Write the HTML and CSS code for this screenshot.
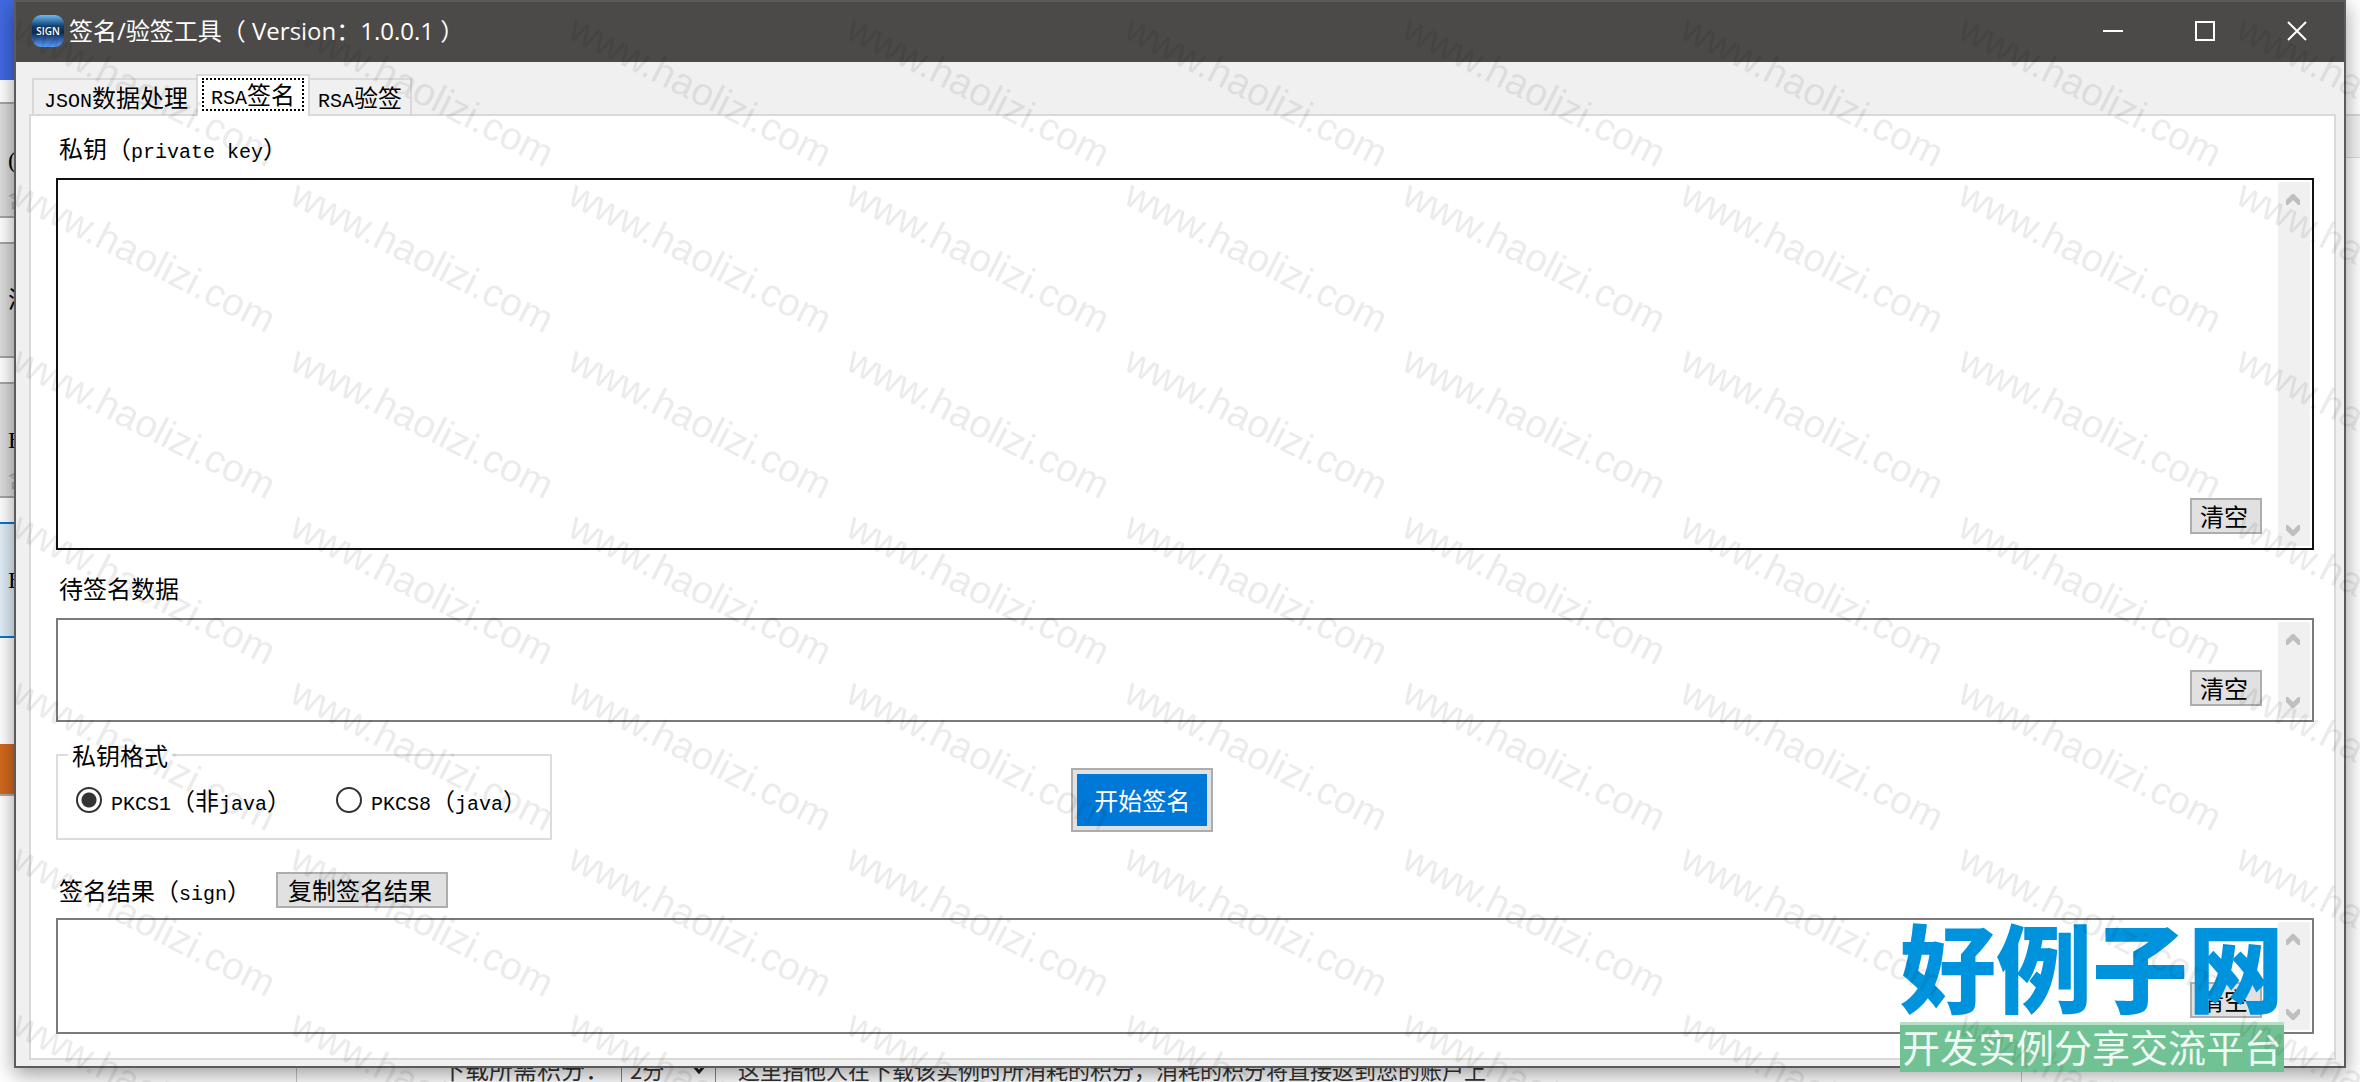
FILE: index.html
```html
<!DOCTYPE html>
<html lang="zh-CN">
<head>
<meta charset="utf-8">
<title>签名/验签工具</title>
<link rel="stylesheet" href="styles.css">
</head>
<body>
<svg class="symbols" aria-hidden="true">
  <symbol id="chevron-up" viewBox="0 0 14 12"><path d="M7 0h1l6 6v5h-2l-5-5-5 5H0V6l6-6z"/></symbol>
  <symbol id="chevron-down" viewBox="0 0 14 12"><path d="M7 12h1l6-6V1h-2L7 6 2 1H0v5l6 6z"/></symbol>
</svg>

<div class="backdrop" aria-hidden="true">
  <div class="side">
    <div class="side-head"></div>
    <div class="tile"><span>(</span><small>含</small></div>
    <div class="tile"><span>济</span></div>
    <div class="tile"><span>B</span><small>含</small></div>
    <div class="tile tile-active"><span>B</span></div>
    <div class="side-action"></div>
  </div>
  <div class="edge"></div>
  <div class="form-strip">
    <span class="form-label">下载所需积分：</span>
    <span class="form-select">2分<svg width="16" height="12" viewBox="0 0 16 12"><path d="M1 1l7 8 7-8"/></svg></span>
    <span class="form-hint">这里指他人在下载该实例时所消耗的积分，消耗的积分将直接返到您的账户上</span>
  </div>
</div>

<main class="window">
  <header class="titlebar">
    <svg class="app-icon" viewBox="0 0 32 32">
      <defs><linearGradient id="icon-fill" x1="0" y1="0" x2="0" y2="1">
        <stop offset="0" stop-color="#6db8f5"/><stop offset=".35" stop-color="#123f6e"/><stop offset=".55" stop-color="#0b2a52"/><stop offset="1" stop-color="#5a9cff"/>
      </linearGradient></defs>
      <rect width="32" height="32" rx="9" fill="url(#icon-fill)"/>
      <text x="16" y="20" text-anchor="middle">SIGN</text>
    </svg>
    <h1>签名/验签工具（ Version：1.0.0.1 ）</h1>
    <div class="window-buttons">
      <button type="button" aria-label="最小化"><svg viewBox="0 0 20 20"><path d="M0 10h20"/></svg></button>
      <button type="button" aria-label="最大化"><svg viewBox="0 0 20 20"><path d="M1 1h18v18H1z"/></svg></button>
      <button type="button" aria-label="关闭"><svg viewBox="0 0 20 20"><path d="M1 1l18 18M19 1L1 19"/></svg></button>
    </div>
  </header>

  <div class="client">
    <div class="tabs" role="tablist">
      <button type="button" class="tab" role="tab"><span class="en">JSON</span>数据处理</button>
      <button type="button" class="tab tab-selected" role="tab" aria-selected="true"><span class="focus"><span class="en">RSA</span>签名</span></button>
      <button type="button" class="tab" role="tab"><span class="en">RSA</span>验签</button>
    </div>

    <section class="panel" role="tabpanel">
      <label class="caption" for="private-key">私钥（<span class="en">private key</span>）</label>
      <div class="field field-key">
        <textarea id="private-key"></textarea>
        <div class="scrollbar"><svg><use href="#chevron-up"/></svg><svg><use href="#chevron-down"/></svg></div>
        <button type="button" class="button clear">清空</button>
      </div>

      <label class="caption caption-data" for="data">待签名数据</label>
      <div class="field field-data">
        <textarea id="data"></textarea>
        <div class="scrollbar"><svg><use href="#chevron-up"/></svg><svg><use href="#chevron-down"/></svg></div>
        <button type="button" class="button clear">清空</button>
      </div>

      <div class="options">
        <fieldset class="format">
          <legend>私钥格式</legend>
          <div class="choices">
            <label class="choice"><input type="radio" name="format" checked><span><span class="en">PKCS1</span>（非<span class="en">java</span>）</span></label>
            <label class="choice"><input type="radio" name="format"><span><span class="en">PKCS8</span>（<span class="en">java</span>）</span></label>
          </div>
        </fieldset>
        <button type="button" class="start"><span>开始签名</span></button>
      </div>

      <div class="result-head">
        <label class="caption" for="result">签名结果（<span class="en">sign</span>）</label>
        <button type="button" class="button copy">复制签名结果</button>
      </div>
      <div class="field field-result">
        <textarea id="result"></textarea>
        <div class="scrollbar"><svg><use href="#chevron-up"/></svg><svg><use href="#chevron-down"/></svg></div>
        <button type="button" class="button clear">清空</button>
      </div>
    </section>
  </div>
</main>

<div class="brand">
  <div class="brand-name">好例子网</div>
  <div class="brand-tag">开发实例分享交流平台</div>
</div>

<svg class="watermark" aria-hidden="true">
  <defs>
    <pattern id="mark" x="8" y="11" width="278" height="166" patternUnits="userSpaceOnUse">
      <text transform="translate(2 26) rotate(27)">www.haolizi.com</text>
    </pattern>
  </defs>
  <rect width="100%" height="100%" fill="url(#mark)"/>
</svg>
</body>
</html>
```
FILE: styles.css
```css
* {
  box-sizing: border-box;
}

body {
  margin: 0;
  min-height: 100vh;
  padding: 0 14px 14px;
  display: flex;
  flex-direction: column;
  position: relative;
  overflow: hidden;
  background: #fff;
  color: #000;
  font: 24px/32px "Noto Sans CJK SC", sans-serif;
}

button {
  margin: 0;
  padding: 0;
  border: 0;
  font: inherit;
  color: inherit;
}

.symbols {
  position: absolute;
  width: 0;
  height: 0;
}

.en {
  font-family: "Liberation Mono", monospace;
  font-size: 20px;
  line-height: 20px;
}

/* Page behind the window */

.backdrop {
  position: absolute;
  inset: 0;
  overflow: hidden;
}

.side {
  width: 100px;
  display: flex;
  flex-direction: column;
  gap: 24px;
}

.side-head {
  height: 80px;
  margin-bottom: -2px;
  background: #4169e1;
}

.tile {
  height: 116px;
  padding: 36px 0 0 8px;
  border: solid #a5a5a5;
  border-width: 2px 0;
  background: #dcdcdc;
  font-family: "Liberation Serif", "Noto Sans CJK SC", serif;
  line-height: 40px;
}

.tile small {
  display: block;
  font-size: 22px;
  color: #aaa;
}

.tile-active {
  border-color: #0078d7;
  background: #e1eef8;
}

.side-action {
  height: 52px;
  margin-top: 82px;
  background: #d2691e;
  border-bottom: 2px solid #aaa;
}

.edge {
  position: absolute;
  top: 114px;
  right: 0;
  width: 16px;
  height: 44px;
  border-top: 2px solid #d9d9d9;
  border-bottom: 1px solid #d9d9d9;
  background: #f4f4f4;
}

.form-strip {
  position: absolute;
  left: 296px;
  right: 338px;
  bottom: 0;
  height: 40px;
  display: flex;
  align-items: flex-end;
  border: solid #c4c4c4;
  border-width: 0 1px;
  color: #333;
  line-height: 26px;
  white-space: nowrap;
}

.form-label {
  width: 324px;
  padding-left: 144px;
}

.form-select {
  width: 95px;
  padding: 0 8px;
  display: flex;
  align-items: center;
  justify-content: space-between;
  border: solid #888;
  border-width: 0 1px;
  font-size: 22px;
}

.form-select svg {
  fill: none;
  stroke: #222;
  stroke-width: 3;
}

.form-hint {
  margin-left: 22px;
  font-size: 22px;
}

/* Window frame */

.window {
  position: relative;
  flex: 1;
  display: flex;
  flex-direction: column;
  border: 2px solid #5b5b5b;
  background: #f0f0f0;
  box-shadow: 0 6px 20px rgba(0, 0, 0, .4);
}

.titlebar {
  height: 60px;
  padding: 0 1px 2px 16px;
  display: flex;
  align-items: center;
  background: #4c4a48;
  color: #fff;
}

.app-icon {
  width: 32px;
  height: 32px;
  margin-right: 5px;
}

.app-icon text {
  font: 600 10px "Open Sans", sans-serif;
  fill: #fff;
}

h1 {
  margin: 0;
  flex: 1;
  font: 24px/32px "Open Sans", "Noto Sans CJK SC", sans-serif;
}

.window-buttons {
  display: flex;
}

.window-buttons button {
  width: 92px;
  height: 58px;
  display: grid;
  place-items: center;
  background: none;
}

.window-buttons svg {
  width: 20px;
  height: 20px;
  fill: none;
  stroke: #fff;
  stroke-width: 2;
}

/* Tabs */

.client {
  flex: 1;
  display: flex;
  flex-direction: column;
  padding: 12px 8px 6px 13px;
}

.tabs {
  position: relative;
  display: flex;
  align-items: flex-end;
  padding-left: 3px;
}

.tab {
  height: 38px;
  padding: 0 8px 0 10px;
  border: 2px solid #d9d9d9;
  background: #f0f0f0;
}

.tab + .tab {
  padding: 0 8px;
  border-left-width: 0;
}

.tab.tab-selected {
  height: 42px;
  margin-left: -2px;
  padding: 0 4px 4px;
  border-left-width: 2px;
  border-bottom: 0;
  background: #fff;
}

.focus {
  display: block;
  padding: 0 7px;
  border: 2px dotted #000;
  line-height: 28px;
}

/* Signing panel */

.panel {
  flex: 1;
  display: flex;
  flex-direction: column;
  margin-top: -2px;
  padding: 16px 20px 24px 25px;
  border: 2px solid #d9d9d9;
  background: #fff;
}

.caption {
  padding-left: 3px;
}

.caption-data {
  margin-top: 22px;
}

.field {
  position: relative;
  display: flex;
  margin-top: 14px;
  padding: 2px;
  border: 2px solid #7a7a7a;
}

.field-key {
  flex: 1;
  min-height: 160px;
  border-color: #111;
}

.field-data {
  height: 104px;
}

.field-result {
  height: 116px;
  margin-top: 10px;
}

textarea {
  flex: 1;
  padding: 4px;
  border: 0;
  outline: 0;
  resize: none;
  overflow: hidden;
  background: none;
  font: inherit;
}

.scrollbar {
  width: 32px;
  padding: 12px 0 10px 8px;
  display: flex;
  flex-direction: column;
  justify-content: space-between;
  background: #f0f0f0;
}

.scrollbar svg {
  width: 14px;
  height: 12px;
  fill: #bfbfbf;
}

.button {
  height: 36px;
  padding: 0 4px 2px 0;
  border: 2px solid #adadad;
  background: #e1e1e1;
}

.clear {
  position: absolute;
  right: 50px;
  bottom: 14px;
  width: 72px;
}

.options {
  display: flex;
  align-items: flex-end;
  margin-top: 18px;
}

.format {
  width: 496px;
  height: 100px;
  margin: 0;
  padding: 0 18px;
  border: 2px solid #dcdcdc;
}

legend {
  margin-left: -8px;
  padding: 0 4px;
  line-height: 30px;
}

.choices {
  display: flex;
  gap: 45px;
  margin-top: 14px;
}

.choice {
  display: flex;
  align-items: center;
  gap: 9px;
}

.choice input {
  appearance: none;
  width: 26px;
  height: 26px;
  margin: 0;
  border: 2px solid #333;
  border-radius: 50%;
  background: #fff;
}

.choice input:checked {
  background: radial-gradient(circle, #333 7px, #fff 8px);
}

.start {
  width: 142px;
  height: 64px;
  margin: 0 0 8px 23%;
  padding: 4px;
  border: 2px solid #adadad;
  background: #e1e1e1;
}

.start span {
  display: block;
  background: #0078d7;
  color: #fff;
  line-height: 52px;
}

.result-head {
  display: flex;
  align-items: center;
  margin-top: 32px;
}

.copy {
  width: 172px;
  margin-left: 25px;
}

/* Site branding over the corner */

.brand {
  position: absolute;
  right: 76px;
  bottom: 10px;
  width: 384px;
}

.brand-name {
  display: flex;
  justify-content: space-between;
  padding-bottom: 6px;
  color: #0093dd;
  font-weight: 900;
  font-size: 96px;
  line-height: 104px;
  white-space: nowrap;
}

.brand-tag {
  height: 50px;
  background: #70c294;
  border-top: 3px solid #b5dfc6;
  color: #f0faf4;
  font-size: 38px;
  line-height: 42px;
  text-align: center;
  white-space: nowrap;
}

.watermark {
  position: absolute;
  inset: 0;
  width: 100%;
  height: 100%;
  pointer-events: none;
}

.watermark text {
  font: 39px "Liberation Sans", Arial, sans-serif;
  fill: rgba(0, 0, 0, .08);
}
```
